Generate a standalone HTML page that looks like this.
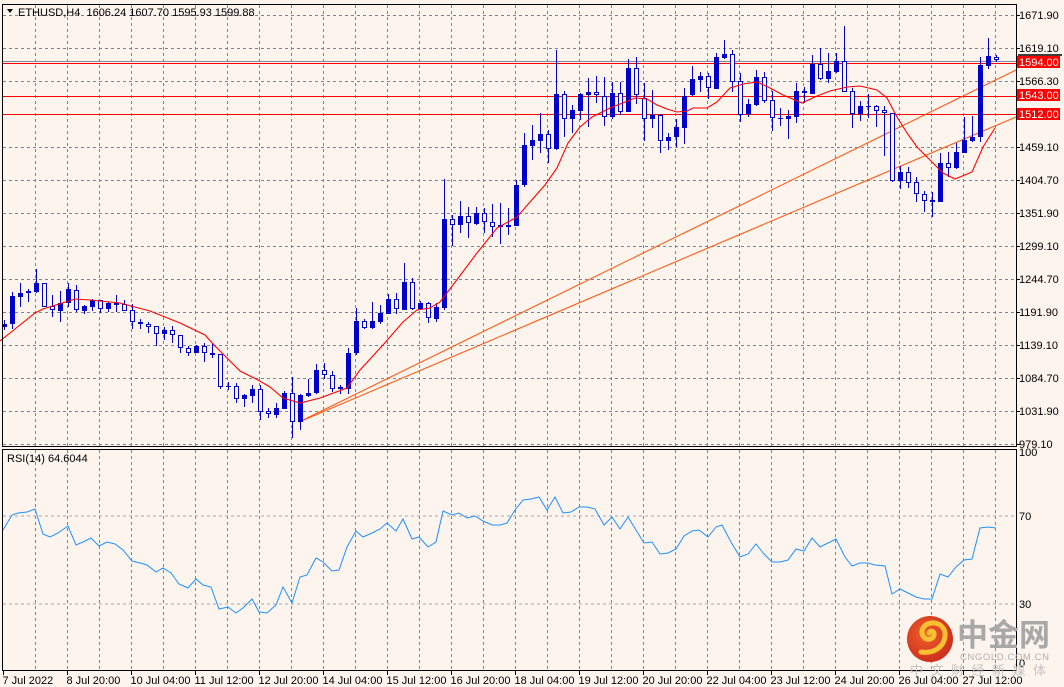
<!DOCTYPE html>
<html><head><meta charset="utf-8">
<style>
html,body{margin:0;padding:0;background:#fdf4ee;}
svg{display:block;font-family:"Liberation Sans",Tahoma,sans-serif;}
</style></head>
<body>
<svg id="s" width="1064" height="687" xmlns="http://www.w3.org/2000/svg">
<rect width="1064" height="687" fill="#fdf4ee"/>
<g id="grid" stroke="#7a8494" stroke-width="1" stroke-dasharray="3,3"></g>
<line x1="3" y1="61.5" x2="1016" y2="61.5" stroke="#7d8898" stroke-width="1"/>
<line x1="3" y1="63.5" x2="1016" y2="63.5" stroke="#ff0000" stroke-width="1"/>
<line x1="3" y1="96.5" x2="1016" y2="96.5" stroke="#ff0000" stroke-width="1"/>
<line x1="3" y1="114.5" x2="1016" y2="114.5" stroke="#ff0000" stroke-width="1"/>
<line x1="299" y1="422" x2="1016" y2="70" stroke="#ff5a14" stroke-width="1.1"/>
<line x1="299" y1="422" x2="1016" y2="117" stroke="#ff5a14" stroke-width="1.1"/>
<g id="candles"></g>
<polyline fill="none" stroke="#ff0000" stroke-width="1.1" points="0,341 10,333 35,313 43,309 75,299 90,300 120,303 131,306 150,311 165,317 180,323 205,335 215,346 225,356 240,371 258,380 270,387 283,398 300,403 320,398 347,388 360,370 383,345 403,322 417,310 430,308 440,302 453,285 477,253 497,228 517,217 530,202 545,185 557,168 568,143 580,127 592,117 610,108 625,102 635,98 647,99 657,105 667,109 677,112 687,111 693,108 707,108 717,102 730,88 743,84 757,82 770,88 783,95 802,103 817,96 830,91 847,87 860,86 877,90 887,98 897,117 907,133 917,147 930,160 943,173 955,179 972,172 983,147 995,128"/>
<rect x="2.5" y="4.5" width="1014" height="442" fill="none" stroke="#000" stroke-width="1"/>
<rect x="2.5" y="449.5" width="1014" height="221" fill="none" stroke="#000" stroke-width="1"/>
<line x1="3" y1="516" x2="1016" y2="516" stroke="#a9a9a9" stroke-dasharray="3,3"/>
<line x1="3" y1="604" x2="1016" y2="604" stroke="#a9a9a9" stroke-dasharray="3,3"/>
<polyline fill="none" stroke="#1e90ff" stroke-width="1" points="3,530 12,515 18,513 27,512 35,509 43,534 50,537 58,533 68,526 76,545 83,542 91,538 99,546 107,542 115,544 123,550 132,561 140,563 147,565 156,572 163,568 171,573 179,584 188,588 196,579 203,585 211,587 219,609 228,607 236,613 243,608 252,599 259,612 267,613 276,605 283,587 292,603 300,577 307,575 316,558 323,562 332,571 339,570 347,547 356,531 363,537 372,533 380,529 387,523 396,531 403,519 412,539 419,537 428,547 436,542 443,511 452,515 459,513 467,518 475,516 483,521 492,525 500,525 507,523 515,510 523,500 531,499 539,497 547,510 555,497 563,513 571,512 579,507 587,507 595,509 604,525 612,517 620,529 628,517 636,530 644,543 652,542 660,554 668,553 676,549 684,536 692,531 699,530 708,537 716,527 722,525 731,542 740,557 748,554 756,544 764,554 772,562 780,562 788,560 796,549 804,551 812,538 820,547 828,543 836,539 845,557 852,566 860,563 868,563 875,565 885,566 892,594 900,589 908,593 916,597 924,599 932,599 940,574 948,577 956,567 964,560 972,559 980,528 988,527 996,528"/>
<text x="7" y="462" font-size="11" fill="#000">RSI(14) 64.6044</text>
<polygon points="7,9 13,9 10,13" fill="#000"/>
<text x="18" y="16" font-size="11" fill="#000" xml:space="preserve">ETHUSD,H4  1606.24 1607.70 1595.93 1599.88</text>
<g id="axis" font-size="11" fill="#000"></g>
<line x1="1018" y1="55" x2="1062" y2="55" stroke="#000" stroke-width="1.5"/>
<rect x="1017" y="56" width="43" height="12" fill="#ff0000"/>
<text x="1019" y="66" font-size="11" fill="#fff">1594.00</text>
<rect x="1017" y="89" width="43" height="12" fill="#ff0000"/>
<text x="1019" y="99" font-size="11" fill="#fff">1543.00</text>
<rect x="1017" y="108" width="43" height="12" fill="#ff0000"/>
<text x="1019" y="118" font-size="11" fill="#fff">1512.00</text>
<defs>
<radialGradient id="lg" cx="40%" cy="40%" r="70%"><stop offset="0" stop-color="#f0602a"/><stop offset="1" stop-color="#c8281c"/></radialGradient>
</defs>
<circle cx="930" cy="639" r="23" fill="url(#lg)"/>
<path d="M921,652 C935,654 944,646 945,636 C946,627 938,622 931,623 C924,624 920,630 923,636 C926,641 933,640 934,635 C935,631 930,630 929,633" fill="none" stroke="#f8c030" stroke-width="5" stroke-linecap="round"/>
<text x="957" y="646" font-size="31" fill="#a8a8a8" font-weight="bold" font-family="'Liberation Sans','Noto Sans CJK SC',sans-serif">中金网</text>
<text x="960" y="660" font-size="9.5" fill="#b0b0b0" letter-spacing="0.6">CNGOLD.COM.CN</text>
<text x="910" y="675" font-size="13" fill="#c4c4c4" letter-spacing="7.5" font-family="'Liberation Sans','Noto Sans CJK SC',sans-serif">中文财经新媒体</text>
</svg>
<script>
var NS="http://www.w3.org/2000/svg";
function el(t,a,p){var e=document.createElementNS(NS,t);for(var k in a)e.setAttribute(k,a[k]);p.appendChild(e);return e;}
var g=document.getElementById('grid');
for(var x=35.5;x<1016;x+=32){el('line',{x1:x,y1:5,x2:x,y2:446},g);el('line',{x1:x,y1:450,x2:x,y2:670},g);}
var ys=[15,48,81,114,147,180,213,246,279,312,345,378,411,444];
ys.forEach(function(y){el('line',{x1:3,y1:y+.5,x2:1016,y2:y+.5},g);});
var ax=document.getElementById('axis');
var labs=["1671.90","1619.10","1566.30","","1459.10","1404.70","1351.90","1299.10","1244.70","1191.90","1139.10","1084.70","1031.90","979.10"];
ys.forEach(function(y,i){if(labs[i]){el('line',{x1:1016,y1:y+.5,x2:1020,y2:y+.5,stroke:'#000'},ax);var t=el('text',{x:1019,y:y+4},ax);t.textContent=labs[i];}});
[[456,"100"],[520,"70"],[608,"30"],[667,"0"]].forEach(function(a){var t=el('text',{x:1019,y:a[0]},ax);t.textContent=a[1];});
var dl=["7 Jul 2022","8 Jul 20:00","10 Jul 04:00","11 Jul 12:00","12 Jul 20:00","14 Jul 04:00","15 Jul 12:00","16 Jul 20:00","18 Jul 04:00","19 Jul 12:00","20 Jul 20:00","22 Jul 04:00","23 Jul 12:00","24 Jul 20:00","26 Jul 04:00","27 Jul 12:00"];
dl.forEach(function(s,i){var x=3.5+64*i;el('line',{x1:x,y1:671,x2:x,y2:675,stroke:'#000'},ax);var t=el('text',{x:x-1,y:684},ax);t.textContent=s;});
var D=[[320,330,324,327,1],[292,329,296,324,1],[283,307,293,297,1],[289,302,291,293,1],[269,293,283,292,1],[283,307,283,307,0],[295,317,306,310,0],[291,322,303,311,1],[283,307,289,303,1],[285,312,290,310,0],[305,314,306,311,1],[299,311,300,307,1],[300,313,300,309,0],[302,312,303,309,1],[295,312,303,305,1],[300,311,304,311,0],[304,329,310,322,0],[319,329,322,324,0],[322,333,324,327,0],[326,346,326,334,0],[327,340,330,334,1],[326,343,330,335,0],[335,353,335,348,0],[346,356,348,353,0],[345,353,346,353,1],[343,362,346,353,0],[343,358,353,355,1],[354,389,354,387,0],[382,390,386,387,1],[383,403,386,399,0],[394,407,395,399,1],[385,403,389,396,1],[385,420,389,412,0],[408,418,411,414,0],[403,418,408,415,1],[391,409,393,409,1],[377,438,393,422,0],[394,430,395,422,1],[379,397,393,396,1],[364,394,370,393,1],[363,379,370,375,0],[371,392,375,389,0],[385,394,387,389,1],[348,394,353,389,1],[308,355,321,353,1],[319,329,321,328,0],[302,329,321,328,1],[305,324,313,322,1],[294,314,299,314,1],[293,314,299,309,0],[263,310,282,310,1],[278,310,282,309,0],[301,310,303,309,1],[302,323,303,318,0],[303,322,307,319,1],[179,310,219,308,1],[215,246,219,225,0],[201,233,216,225,1],[207,238,216,223,0],[207,225,213,224,1],[208,233,213,222,0],[204,237,222,227,0],[203,244,225,227,1],[208,235,225,227,1],[180,226,185,226,1],[133,187,145,185,1],[125,160,140,146,1],[113,153,134,141,1],[130,163,134,149,0],[50,150,94,149,1],[91,137,94,119,0],[105,133,110,119,1],[93,120,94,111,1],[78,127,92,95,1],[76,103,92,95,0],[77,126,96,117,0],[82,119,93,117,1],[82,115,93,112,0],[59,112,68,112,1],[57,104,68,95,0],[83,141,98,119,0],[90,128,115,119,1],[114,153,115,141,0],[133,150,137,141,1],[119,147,127,137,1],[88,144,96,128,1],[66,96,79,95,1],[72,92,76,80,1],[73,99,76,88,0],[53,89,57,89,1],[40,59,54,58,1],[50,92,54,82,0],[73,122,81,115,0],[99,117,104,114,1],[70,106,77,105,1],[72,103,77,101,0],[91,131,100,118,0],[108,126,118,119,1],[110,139,116,119,1],[83,123,91,117,1],[87,103,91,93,0],[55,94,64,94,1],[48,80,64,79,0],[53,83,71,79,1],[53,73,61,72,1],[26,92,61,92,0],[88,128,91,114,0],[101,121,106,114,1],[94,118,106,107,1],[105,127,106,111,0],[106,156,110,113,0],[113,182,113,181,0],[166,189,172,181,1],[167,188,172,183,0],[177,202,182,194,0],[191,212,194,201,0],[192,217,200,202,1],[153,202,163,202,1],[152,177,163,168,0],[143,169,152,168,1],[117,153,140,153,1],[116,142,137,141,1],[57,142,65,137,1],[38,69,56,66,1],[55,62,57,60,0]];
var c=document.getElementById('candles');
D.forEach(function(d,i){var x=Math.round(3.5+8*i)+0.5;var col='#0000cc';
el('line',{x1:x,y1:d[0],x2:x,y2:d[1],stroke:col,'stroke-width':1},c);
var h=Math.max(d[3]-d[2],1);
if(d[4])el('rect',{x:x-2.5,y:d[2],width:5,height:h,fill:col},c);
else el('rect',{x:x-2,y:d[2]+.5,width:4,height:Math.max(h-1,1),fill:'#fdf4ee',stroke:col,'stroke-width':1},c);});
</script>
</body></html>
